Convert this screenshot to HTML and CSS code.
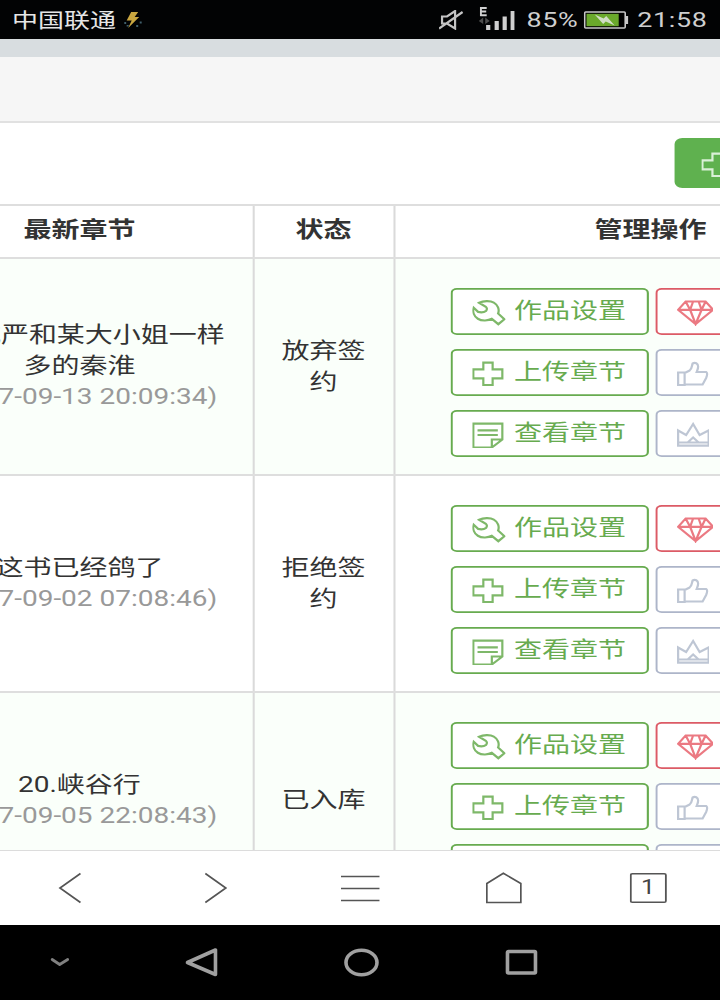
FILE: index.html
```html
<!DOCTYPE html>
<html lang="zh-CN">
<head>
    <meta charset="UTF-8">
    <meta name="viewport" content="width=device-width, initial-scale=1.0">
    <title>作品管理</title>
    <link rel="stylesheet" href="styles.css">
</head>
<body>

    <!-- 图标 -->
    <svg class="icon-defs" width="0" height="0">
        <defs>
            <path id="wrench" d="M6.8 2.8C11 .8 18 .6 21.5 2.6C25.500 5 27.300 9.500 25.800 13.500L32 19.300L26 24.200L19.500 18.800C16 20.800 9.500 21.300 5.500 18.800C1.500 16.300 0 11.500 1.300 7.800L5.800 11.900C8.500 12.500 12 12.200 13.800 10.800C15 9.200 14.600 7.800 13.500 6.800Z"/>
            <path id="plus" d="M11 1.700H20.300V8.400H30V17.300H20.300V24H11V17.300H1V8.400H11Z"/>
            <path id="note" d="M1 1.700H30V17.500L19.500 25.500H1ZM19.500 25.500V17.500H30M5.200 8.300H25.500M5.200 13H25.500"/>
            <path id="gem" d="M8.500 1.500H28.500L36 9.800L18.500 24L1 9.800ZM1 9.800H36M8.500 1.500L13 9.800L18.500 24L24.500 9.800L28.500 1.500M13 9.800L16 1.500M24.500 9.800L21.500 1.500"/>
            <path id="thumb" d="M1 11.500H7.500V24H1ZM7.500 12L12.500 9.500C15 7.500 14.500 5 15.500 2.500C18 .8 21 2.500 21 5.500C21 8 20 9.500 19.500 11H29C31 12 30 14.500 29 17L25.500 23.500H7.500"/>
            <path id="crown" d="M1 8.500L9 13L16 2L22.500 13L31.500 8.500V23.700H1ZM1 20.500H31.500M10.500 20.500L16 15.500L21.500 20.500"/>
        </defs>
    </svg>

    <div class="screen">

        <div class="status-bar">
            <span class="carrier">中国联通</span>
            <svg class="bolt" viewBox="0 0 18 18" preserveAspectRatio="none">
                <path d="M7 1H14L10.500 6H15L4 17L7.500 9.500H2.500Z" fill="#c9a640"/>
                <path d="M0 11h2v2h-2zM2.500 14h2v1.500h-2zM12 14h2v2h-2zM15.500 10.500h2v2h-2z" fill="#40606c"/>
            </svg>
            <svg class="mute" viewBox="0 0 24 20" preserveAspectRatio="none">
                <path d="M3 6.500H8L16 1V18.500L8 13.500H3ZM0 18.500L23.500 2" fill="none" stroke="#c4c4c4" stroke-width="2.200"/>
            </svg>
            <svg class="signal" viewBox="0 0 36 24" preserveAspectRatio="none">
                <path d="M1.500 1H8M1.500 4.500H7.500M1.500 8.200H8M2.200 0V9" fill="none" stroke="#d0d0d0" stroke-width="1.900"/>
                <path d="M0 14L4.500 10.500V17ZM11 14L6.500 10.500V17Z" fill="#4c4c4c"/>
                <path d="M9.500 18V23M18 14V23M26 9.500V23M34 4V23" stroke="#d0d0d0" stroke-width="4.200"/>
            </svg>
            <span class="percent">85%</span>
            <svg class="battery" viewBox="0 0 45 18" preserveAspectRatio="none">
                <rect x="1" y="1" width="40.500" height="16" rx="1" fill="#000" stroke="#c8c8c8" stroke-width="1.600"/>
                <rect x="2.800" y="2.800" width="32.200" height="12.400" fill="#6aa92b"/>
                <path d="M42 5H44.500V13H42" fill="#c8c8c8"/>
                <path d="M11 3.500L20 7.500L22.500 5L31 14.500L22 10.500L19.500 13Z" fill="#d0ddc4"/>
            </svg>
            <span class="clock">21:58</span>
        </div>

        <div class="page">
            <div class="page-strip"></div>
            <div class="page-title"></div>
            <div class="page-tools">
                <div class="new-btn">
                    <svg class="icon" viewBox="0 0 33 26" preserveAspectRatio="none"><use href="#plus"/></svg>
                </div>
            </div>

            <div class="row head">
                <div class="cell">最新章节</div>
                <div class="cell">状态</div>
                <div class="cell">管理操作</div>
            </div>

            <div class="row odd">
                <div class="cell">
                    <p>20.威严和某大小姐一样<br>多的秦淮</p>
                    <p class="date">(2017-09-13 20:09:34)</p>
                </div>
                <div class="cell state">放弃签约</div>
                <div class="cell actions">
                    <div class="btn"><svg class="icon" viewBox="0 0 33 26" preserveAspectRatio="none"><use href="#wrench"/></svg>作品设置</div>
                    <div class="btn red"><svg class="icon wide" viewBox="0 0 37 26" preserveAspectRatio="none"><use href="#gem"/></svg></div>
                    <div class="btn"><svg class="icon" viewBox="0 0 33 26" preserveAspectRatio="none"><use href="#plus"/></svg>上传章节</div>
                    <div class="btn gray"><svg class="icon" viewBox="0 0 33 26" preserveAspectRatio="none"><use href="#thumb"/></svg></div>
                    <div class="btn"><svg class="icon" viewBox="0 0 33 26" preserveAspectRatio="none"><use href="#note"/></svg>查看章节</div>
                    <div class="btn gray"><svg class="icon" viewBox="0 0 33 26" preserveAspectRatio="none"><use href="#crown"/></svg></div>
                </div>
            </div>

            <div class="row">
                <div class="cell">
                    <p>这书已经鸽了</p>
                    <p class="date">(2017-09-02 07:08:46)</p>
                </div>
                <div class="cell state">拒绝签约</div>
                <div class="cell actions">
                    <div class="btn"><svg class="icon" viewBox="0 0 33 26" preserveAspectRatio="none"><use href="#wrench"/></svg>作品设置</div>
                    <div class="btn red"><svg class="icon wide" viewBox="0 0 37 26" preserveAspectRatio="none"><use href="#gem"/></svg></div>
                    <div class="btn"><svg class="icon" viewBox="0 0 33 26" preserveAspectRatio="none"><use href="#plus"/></svg>上传章节</div>
                    <div class="btn gray"><svg class="icon" viewBox="0 0 33 26" preserveAspectRatio="none"><use href="#thumb"/></svg></div>
                    <div class="btn"><svg class="icon" viewBox="0 0 33 26" preserveAspectRatio="none"><use href="#note"/></svg>查看章节</div>
                    <div class="btn gray"><svg class="icon" viewBox="0 0 33 26" preserveAspectRatio="none"><use href="#crown"/></svg></div>
                </div>
            </div>

            <div class="row odd">
                <div class="cell">
                    <p>20.峡谷行</p>
                    <p class="date">(2017-09-05 22:08:43)</p>
                </div>
                <div class="cell state">已入库</div>
                <div class="cell actions">
                    <div class="btn"><svg class="icon" viewBox="0 0 33 26" preserveAspectRatio="none"><use href="#wrench"/></svg>作品设置</div>
                    <div class="btn red"><svg class="icon wide" viewBox="0 0 37 26" preserveAspectRatio="none"><use href="#gem"/></svg></div>
                    <div class="btn"><svg class="icon" viewBox="0 0 33 26" preserveAspectRatio="none"><use href="#plus"/></svg>上传章节</div>
                    <div class="btn gray"><svg class="icon" viewBox="0 0 33 26" preserveAspectRatio="none"><use href="#thumb"/></svg></div>
                    <div class="btn"></div>
                    <div class="btn gray"></div>
                </div>
            </div>
        </div>

        <!-- 浏览器工具栏 -->
        <div class="toolbar">
            <div><svg viewBox="0 0 40 32" preserveAspectRatio="none"><path d="M28 1.500L7.500 16L28 30.500"/></svg></div>
            <div><svg viewBox="0 0 40 32" preserveAspectRatio="none"><path d="M9.500 1.500L30 16L9.500 30.500"/></svg></div>
            <div><svg viewBox="0 0 40 32" preserveAspectRatio="none"><path d="M.5 4.500H39M.5 16.500H39M.5 28.500H39"/></svg></div>
            <div><svg viewBox="0 0 40 32" preserveAspectRatio="none"><path d="M3 30.500V11.500L19.500 1.200L37 11.500V30.500Z"/></svg></div>
            <div><span class="tabs">1</span></div>
        </div>

        <!-- 系统导航键 -->
        <div class="nav-bar">
            <div><svg viewBox="0 0 40 32" preserveAspectRatio="none"><path class="dim" d="M12.500 13.500L20 18.500L28 13.500"/></svg></div>
            <div><svg viewBox="0 0 40 32" preserveAspectRatio="none"><path d="M35 4V28.500L7 16.500Z"/></svg></div>
            <div><svg viewBox="0 0 40 32" preserveAspectRatio="none"><ellipse cx="21" cy="16.500" rx="15.500" ry="12.300"/></svg></div>
            <div><svg viewBox="0 0 40 32" preserveAspectRatio="none"><rect x="7" y="5.500" width="28" height="21.500" rx="1"/></svg></div>
        </div>

    </div>

</body>
</html>
```
FILE: styles.css
```css
body {
    margin: 0;
    width: 720px;
    height: 1000px;
    overflow: hidden;
    font-family: Roboto, "Noto Sans CJK SC", sans-serif;
    color: #333;
}
.icon-defs {
    display: block;
}
/* 562.5px 宽的画面横向拉伸到 720px */
.screen {
    width: 562.5px;
    height: 1000px;
    display: flex;
    flex-direction: column;
    overflow: hidden;
    transform: scaleX(1.28);
    transform-origin: 0 0;
}
svg {
    display: block;
    flex: none;
}
.status-bar {
    height: 39px;
    flex: none;
    box-sizing: border-box;
    padding: 0 9.8px 0 9.4px;
    background-color: #020304;
    color: #cfcfcf;
    display: flex;
    align-items: center;
    font-size: 21px;
    letter-spacing: 0.5px;
}
.percent,
.clock {
    padding-top: 1px;
}
.carrier {
    padding-bottom: 2px;
    color: #e6e6e6;
    font-size: 20.3px;
    letter-spacing: 0;
}
.bolt {
    width: 14.1px;
    height: 18px;
    margin-left: 6.5px;
}
.mute {
    width: 18.8px;
    height: 20px;
    margin-left: auto;
}
.signal {
    width: 28.1px;
    height: 24px;
    margin: 0 9.4px 2px 11.7px;
}
.battery {
    width: 35.2px;
    height: 18px;
    margin: 0 7px 0 3.9px;
}
.page {
    height: 811px;
    flex: none;
    overflow: hidden;
    background-color: #fff;
}
.page-strip {
    height: 18px;
    background-color: #d8dde0;
}
.page-title {
    height: 64px;
    background-color: #f6f6f6;
    border-bottom: 2px solid #e1e1e1;
}
.page-tools {
    height: 81px;
    box-sizing: border-box;
    padding: 15px 0 0 527.3px;
}
.new-btn {
    width: 156px;
    height: 50px;
    box-sizing: border-box;
    padding: 11px 0 0 20.3px;
    border-radius: 6px;
    background-color: #5fb14f;
    color: #f0fbee;
}
.row {
    display: grid;
    grid-template-columns: 271.9px 109.4px 401.6px;
    width: 782.9px;
    height: 217px;
    margin-left: -72.7px;
    box-sizing: border-box;
    border-top: 2px solid #dedede;
}
.row.head {
    height: 53px;
    font-weight: bold;
}
.row.odd {
    background-color: #fafffa;
}
.cell {
    box-sizing: border-box;
    box-shadow: inset -1.6px 0 0 #dadada;
    padding: 0 2.4px 2px 0;
    display: flex;
    flex-direction: column;
    justify-content: center;
    align-items: center;
    text-align: center;
    font-size: 21.875px;
    line-height: 31px;
}
.head .cell {
    padding-bottom: 4px;
}
.cell p {
    margin: 0;
}
.cell .date {
    color: #999;
}
.cell.state {
    padding: 0 16.4px 2px 14px;
}
.cell.actions {
    display: grid;
    grid-template-columns: 154.7px 154.7px;
    grid-auto-rows: 47px;
    gap: 14px 4.7px;
    align-content: start;
    align-items: stretch;
    justify-content: start;
    padding: 29px 0 0 43.8px;
}
.btn {
    box-sizing: border-box;
    padding: 0 0 1px 16.8px;
    box-shadow: inset 0 0 0 1.7px #67ab4f;
    border-radius: 5px;
    background-color: #fff;
    color: #67ab4f;
    display: flex;
    align-items: center;
    line-height: 44px;
}
.btn.red {
    box-shadow: inset 0 0 0 1.7px #dc5b66;
    color: #e8616c;
}
.btn.gray {
    box-shadow: inset 0 0 0 1.7px #adb5c9;
    color: #b3bccd;
}
.icon {
    width: 25.8px;
    height: 26px;
    margin: 3px 6.6px 0 0;
    fill: none;
    stroke: currentColor;
    stroke-width: 2.2;
    stroke-opacity: 0.85;
}
.icon.wide {
    width: 28.9px;
}
.toolbar {
    height: 75px;
    flex: none;
    box-sizing: border-box;
    padding-bottom: 1px;
    border-top: 1px solid #dcdcdc;
    background-color: #fff;
    display: grid;
    grid-template-columns: repeat(5, 1fr);
    align-items: center;
    justify-items: center;
}
.toolbar svg,
.nav-bar svg {
    width: 31.25px;
    height: 32px;
    fill: none;
}
.toolbar svg {
    stroke: #555;
    stroke-width: 1.7;
}
.tabs {
    display: block;
    width: 29.4px;
    height: 30px;
    box-shadow: inset 0 0 0 1.5px #555;
    border-radius: 2px;
    color: #444;
    font-size: 19.5px;
    line-height: 30px;
    text-align: center;
}
.nav-bar {
    height: 75px;
    flex: none;
    box-sizing: border-box;
    padding-bottom: 2px;
    background-color: #000;
    display: grid;
    grid-template-columns: 93.75px 125px 125px 125px;
    align-items: center;
    justify-items: center;
}
.nav-bar svg {
    stroke: #a0a0a0;
    stroke-width: 3.6;
    stroke-linejoin: round;
    stroke-linecap: round;
}
.nav-bar .dim {
    stroke: #808080;
    stroke-width: 2.8;
}
```
